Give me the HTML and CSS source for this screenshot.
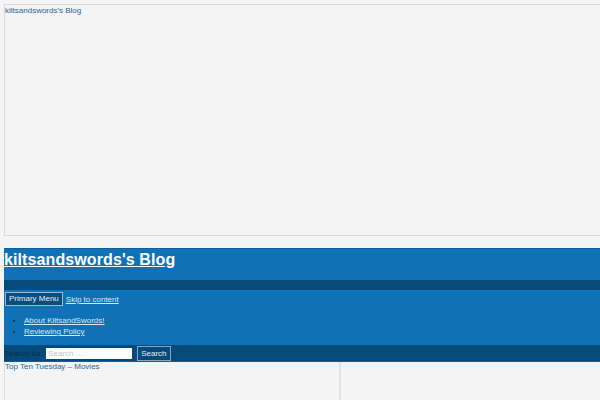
FILE: index.html
```html
<!DOCTYPE html>
<html>
<head>
<meta charset="utf-8">
<link rel="stylesheet" href="styles.css">
</head>
<body>
<div class="page">
  <div class="frame"><span class="frame-title">kiltsandswords's Blog</span></div>
  <header class="masthead">
    <h1 class="site-title"><a href="#">kiltsandswords's Blog</a></h1>
  </header>
  <div class="band"></div>
  <nav class="nav">
    <div class="nav-row">
      <button class="menu-btn">Primary Menu</button>
      <a class="skip" href="#">Skip to content</a>
    </div>
    <ul class="menu">
      <li><a href="#">About KiltsandSwords!</a></li>
      <li><a href="#">Reviewing Policy</a></li>
    </ul>
  </nav>
  <form class="search">
    <label class="search-label">Search for:</label>
    <input class="search-input" type="text" placeholder="Search …">
    <button class="search-btn" type="button">Search</button>
  </form>
  <div class="content">
    <div class="main"><a class="post" href="#">Top Ten Tuesday – Movies</a></div>
    <div class="side"></div>
  </div>
</div>
</body>
</html>
```
FILE: styles.css
```css
html, body {
  margin: 0;
  padding: 0;
  background: #f4f4f4;
  font-family: "Liberation Sans", Arial, sans-serif;
  font-size: 8px;
  overflow: hidden;
}
.page {
  padding: 4px 0 0 4px;
  width: 620px;
  height: 396px;
  overflow: hidden;
}
.frame {
  height: 230px;
  border: 1px solid #d9d9d9;
  background: #f4f4f4;
}
.frame-title {
  display: block;
  color: #2f6590;
  line-height: 9px;
  padding-top: 1px;
}
.masthead {
  margin-top: 12px;
  background: #0f71b6;
  border-top: 1px solid #0b5f9c;
  height: 31px;
}
.site-title {
  margin: 0;
  padding-top: 2px;
  font-size: 16px;
  line-height: 18px;
  font-weight: bold;
  letter-spacing: 0.1px;
}
.site-title a {
  color: #ffffff;
  text-decoration: underline;
}
.band {
  height: 10px;
  background: #054a78;
}
.nav {
  background: #0f71b6;
  height: 55px;
}
.nav-row {
  display: flex;
  align-items: center;
  padding-top: 2px;
  gap: 3px;
}
.menu-btn {
  margin: 0 0 0 1px;
  font-family: inherit;
  font-size: 8px;
  color: #e8f0f7;
  background: #0a4d7c;
  border: 1px solid #9fb8cc;
  padding: 0 3px;
  height: 14px;
  line-height: 12px;
}
.skip, .menu a {
  color: #d9e8f5;
  text-decoration: underline;
}
.menu {
  margin: 9px 0 0 0;
  padding: 0 0 0 20px;
  line-height: 11px;
  color: #0a2c4a;
}
.search {
  display: flex;
  align-items: center;
  height: 16px;
  margin: 0;
  background: #054a78;
  border-bottom: 1px solid #0b5f9c;
}
.search-label {
  color: #0a2c4a;
  margin-right: 3px;
}
.search-input {
  width: 86px;
  height: 11px;
  box-sizing: border-box;
  border: none;
  padding: 0 2px;
  margin: 0;
  font-family: inherit;
  font-size: 8px;
  background: #ffffff;
}
.search-input::placeholder {
  color: #c4c4c4;
}
.search-btn {
  margin-left: 5px;
  height: 15px;
  padding: 0 3px;
  font-family: inherit;
  font-size: 8px;
  color: #e8f0f7;
  background: #054a78;
  border: 1px solid #8aa7bf;
}
.content {
  display: flex;
  height: 40px;
}
.main {
  width: 334px;
  border-left: 1px solid #dedede;
  border-right: 2px solid #e2e2e2;
}
.post {
  display: block;
  color: #2f6590;
  text-decoration: none;
  line-height: 9px;
}
.side {
  flex: 1;
}
```
